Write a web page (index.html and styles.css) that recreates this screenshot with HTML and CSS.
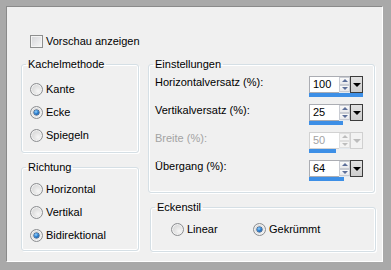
FILE: index.html
```html
<!DOCTYPE html>
<html lang="de">
<head>
  <meta charset="UTF-8" />
  <title>Kacheln</title>
  <link rel="stylesheet" href="styles.css">
</head>
<body>
  <div class="dialog">
    <label class="check-row"><span class="checkbox"></span>Vorschau anzeigen</label>

    <div class="columns">
      <div class="col-left">
        <fieldset class="group method">
          <legend>Kachelmethode</legend>
          <div class="radio-list">
            <label class="opt"><span class="radio"></span>Kante</label>
            <label class="opt"><span class="radio checked"></span>Ecke</label>
            <label class="opt"><span class="radio"></span>Spiegeln</label>
          </div>
        </fieldset>

        <fieldset class="group direction">
          <legend>Richtung</legend>
          <div class="radio-list">
            <label class="opt"><span class="radio"></span>Horizontal</label>
            <label class="opt"><span class="radio"></span>Vertikal</label>
            <label class="opt"><span class="radio checked"></span>Bidirektional</label>
          </div>
        </fieldset>
      </div>

      <div class="col-right">
        <fieldset class="group settings">
          <legend>Einstellungen</legend>
          <div class="rows">
            <div class="row">
              <span class="row-label">Horizontalversatz (%):</span>
              <div class="spin-wrap">
                <div class="spin">
                  <span class="spin-value">100</span>
                  <span class="spin-btns"><span class="up"></span><span class="down"></span></span>
                  <span class="drop"></span>
                </div>
                <div class="bar" style="width:54px"></div>
              </div>
            </div>
            <div class="row">
              <span class="row-label">Vertikalversatz (%):</span>
              <div class="spin-wrap">
                <div class="spin">
                  <span class="spin-value">25</span>
                  <span class="spin-btns"><span class="up"></span><span class="down"></span></span>
                  <span class="drop"></span>
                </div>
                <div class="bar" style="width:34px"></div>
              </div>
            </div>
            <div class="row disabled">
              <span class="row-label">Breite (%):</span>
              <div class="spin-wrap">
                <div class="spin">
                  <span class="spin-value">50</span>
                  <span class="spin-btns"><span class="up"></span><span class="down"></span></span>
                  <span class="drop"></span>
                </div>
                <div class="bar" style="width:27px"></div>
              </div>
            </div>
            <div class="row">
              <span class="row-label">Übergang (%):</span>
              <div class="spin-wrap">
                <div class="spin">
                  <span class="spin-value">64</span>
                  <span class="spin-btns"><span class="up"></span><span class="down"></span></span>
                  <span class="drop"></span>
                </div>
                <div class="bar" style="width:35px"></div>
              </div>
            </div>
          </div>
        </fieldset>

        <fieldset class="group corner">
          <legend>Eckenstil</legend>
          <div class="corner-opts">
            <label class="opt"><span class="radio"></span>Linear</label>
            <label class="opt"><span class="radio checked"></span>Gekrümmt</label>
          </div>
        </fieldset>
      </div>
    </div>
  </div>
</body>
</html>
```

FILE: styles.css
```css
body {
  margin: 0;
  background: #a9a9a9;
  font-family: Tahoma, "Liberation Sans", Arial, sans-serif;
  font-size: 11px;
  line-height: 13px;
  color: #000;
}

.dialog {
  box-sizing: border-box;
  width: 377px;
  height: 256px;
  margin: 6px 0 0 6px;
  padding: 28px 0 0 14px;
  background: #f0f0f0;
  border: 1px solid;
  border-color: #8a8a8a #fff #fff #8a8a8a;
}

.check-row {
  display: flex;
  align-items: center;
  height: 13px;
  margin-left: 9px;
}

.checkbox {
  box-sizing: border-box;
  width: 13px;
  height: 13px;
  margin-right: 3px;
  border: 1px solid #8e8f8f;
  background: linear-gradient(135deg, #d4d5d8, #f7f7f7);
  box-shadow: inset 0 0 0 1px #f4f4f4;
}

.columns {
  display: flex;
  gap: 9px;
  margin-top: 10px;
}

.col-left {
  width: 118px;
}

.col-right {
  width: 228px;
}

.group {
  margin: 0;
  padding: 0;
  min-width: 0;
  border: 1px solid #d5dfe5;
  border-radius: 3px;
  box-shadow: inset 0 0 0 1px #fff, 1px 1px 0 #fff;
}

.group legend {
  padding: 0 2px;
  line-height: 13px;
}

.method,
.direction {
  padding: 0 0 0 8px;
}

.method legend,
.direction legend {
  margin-left: -4px;
}

.method .radio-list {
  padding: 12px 0 10px;
}

.direction {
  margin-top: 8px;
}

.direction .radio-list {
  padding: 9px 0 8px;
}

.radio-list {
  display: flex;
  flex-direction: column;
  gap: 10px;
}

.opt {
  display: flex;
  align-items: center;
  height: 13px;
}

.radio {
  position: relative;
  box-sizing: border-box;
  width: 13px;
  height: 13px;
  margin-right: 3px;
  border: 1px solid #8c8e91;
  border-radius: 50%;
  background: radial-gradient(circle at 65% 65%, #f6f6f6 0, #e2e2e2 45%, #cfd0d2 100%);
  box-shadow: inset 0 0 0 1px #f2f2f2;
}

.radio.checked::after {
  content: "";
  position: absolute;
  left: 3px;
  top: 3px;
  width: 5px;
  height: 5px;
  border-radius: 50%;
  background: radial-gradient(circle at 40% 35%, #9ad6ff 0, #2a7fd0 45%, #123f7c 100%);
  box-shadow: 0 0 0 0.5px #1a3f6e;
}

.settings {
  margin-right: 1px;
  padding: 0 11px 0 6px;
}

.settings legend {
  margin-left: -2px;
}

.rows {
  display: flex;
  flex-direction: column;
  gap: 7px;
  padding: 5px 0 11px;
}

.row {
  display: flex;
  justify-content: space-between;
  align-items: flex-start;
}

.row-label {
  line-height: 13px;
}

.spin-wrap {
  width: 54px;
}

.spin {
  display: flex;
  height: 17px;
}

.spin-value {
  box-sizing: border-box;
  width: 30px;
  padding-left: 3px;
  line-height: 15px;
  background: #fff;
  border: 1px solid #abadb3;
  border-right: 0;
}

.spin-btns {
  display: flex;
  flex-direction: column;
  width: 11px;
  background: #fff;
  border-top: 1px solid #abadb3;
  border-bottom: 1px solid #e3e9ef;
}

.spin-btns span {
  flex: 1;
  display: flex;
  align-items: center;
  justify-content: center;
  border: 1px solid #c9ccd3;
  background: linear-gradient(#fafafa, #e9e9ec);
}

.spin-btns .up::after,
.spin-btns .down::after {
  content: "";
  border-left: 3px solid transparent;
  border-right: 3px solid transparent;
}

.spin-btns .up::after {
  border-bottom: 3px solid #5d6f99;
}

.spin-btns .down::after {
  border-top: 3px solid #5d6f99;
}

.drop {
  box-sizing: border-box;
  width: 13px;
  display: flex;
  align-items: center;
  justify-content: center;
  border: 1px solid #3c3c3c;
  background: linear-gradient(#e2e2e2, #cdcdcd);
}

.drop::after {
  content: "";
  border-left: 4px solid transparent;
  border-right: 4px solid transparent;
  border-top: 4px solid #000;
}

.bar {
  height: 4px;
  background: #3d8fe6;
}

.disabled .row-label,
.disabled .spin-value {
  color: #a3a3a3;
}

.disabled .spin-value {
  border-color: #d2d2d2;
}

.disabled .spin-btns {
  border-top-color: #d2d2d2;
}

.disabled .spin-btns span {
  border-color: #e0e0e0;
  background: #f4f4f4;
}

.disabled .spin-btns .up::after {
  border-bottom-color: #bdbdbd;
}

.disabled .spin-btns .down::after {
  border-top-color: #bdbdbd;
}

.disabled .drop {
  border-color: #d0d0d0;
  background: #f2f2f2;
}

.disabled .drop::after {
  border-top-color: #bcbcbc;
}

.corner {
  margin: 8px 0 0 2px;
  padding: 0 0 0 20px;
}

.corner legend {
  margin-left: -16px;
}

.corner-opts {
  display: grid;
  grid-template-columns: 82px auto;
  padding: 9px 0 15px;
}
```
